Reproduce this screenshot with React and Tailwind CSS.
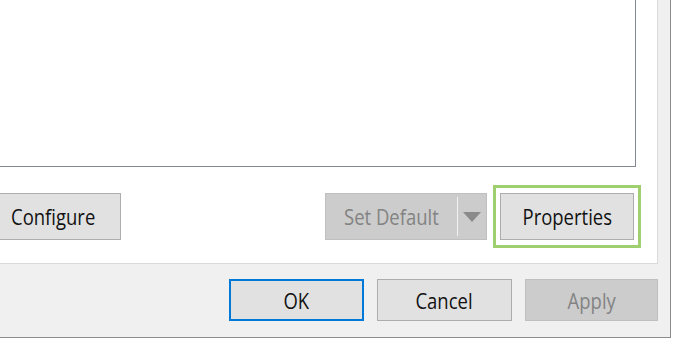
const font = { fontFamily: '"Open Sans", "Noto Sans", sans-serif' };

function Label({ children }) {
  return <span className="inline-block scale-x-[0.84] whitespace-nowrap">{children}</span>;
}

function Btn({ children, className = "" }) {
  return (
    <div
      className={`h-[47px] flex items-center justify-center bg-[#e1e1e1] border border-[#adadad] text-[22px] text-[#111] ${className}`}
    >
      <Label>{children}</Label>
    </div>
  );
}

export default function App() {
  return (
    <div className="w-[675px] h-[338px] overflow-hidden bg-white flex" style={font}>
      <div className="w-[671px] flex flex-col border-r border-[#8c8c8c] bg-[#f0f0f0]">
        {/* tab page */}
        <div className="flex h-[264px]">
          <div className="w-[658px] bg-white border-r border-b border-[#dadada] flex flex-col overflow-hidden">
            <div className="w-[636px] h-[167px] border-r border-b border-[#828790] bg-white" />
            <div className="flex items-center mt-[18px]">
              <Btn className="w-[135px] -ml-[14px] shrink-0">Configure</Btn>
              <div className="ml-[204px] w-[162px] h-[47px] flex bg-[#cccccc] border border-[#bfbfbf] text-[22px] text-[#838383]">
                <div className="w-[131px] flex items-center justify-center">
                  <Label>Set Default</Label>
                </div>
                <div className="w-px my-[3px] bg-[#f2f2f2]" />
                <div className="flex-1 flex items-center justify-center">
                  <svg width="18" height="10" viewBox="0 0 18 10">
                    <path d="M0 0 L18 0 L9 10 Z" fill="#8a8a8a" />
                  </svg>
                </div>
              </div>
              <div className="ml-[6px] w-[148px] border-[3px] border-[#9fcf6f] px-[4px] py-[5px] bg-white">
                <Btn className="w-full">Properties</Btn>
              </div>
            </div>
          </div>
        </div>
        {/* dialog buttons */}
        <div className="flex-1 flex pt-[15px] border-b border-[#8c8c8c]">
          <div className="ml-[229px] w-[135px] h-[42px] flex items-center justify-center bg-[#e1e1e1] border-2 border-[#0078d7] text-[22px] text-[#111]">
            <Label>OK</Label>
          </div>
          <div className="ml-[13px] w-[135px] h-[42px] flex items-center justify-center bg-[#e1e1e1] border border-[#adadad] text-[22px] text-[#111]">
            <Label>Cancel</Label>
          </div>
          <div className="ml-[13px] w-[133px] h-[42px] flex items-center justify-center bg-[#cccccc] border border-[#bfbfbf] text-[22px] text-[#838383]">
            <Label>Apply</Label>
          </div>
        </div>
      </div>
    </div>
  );
}
